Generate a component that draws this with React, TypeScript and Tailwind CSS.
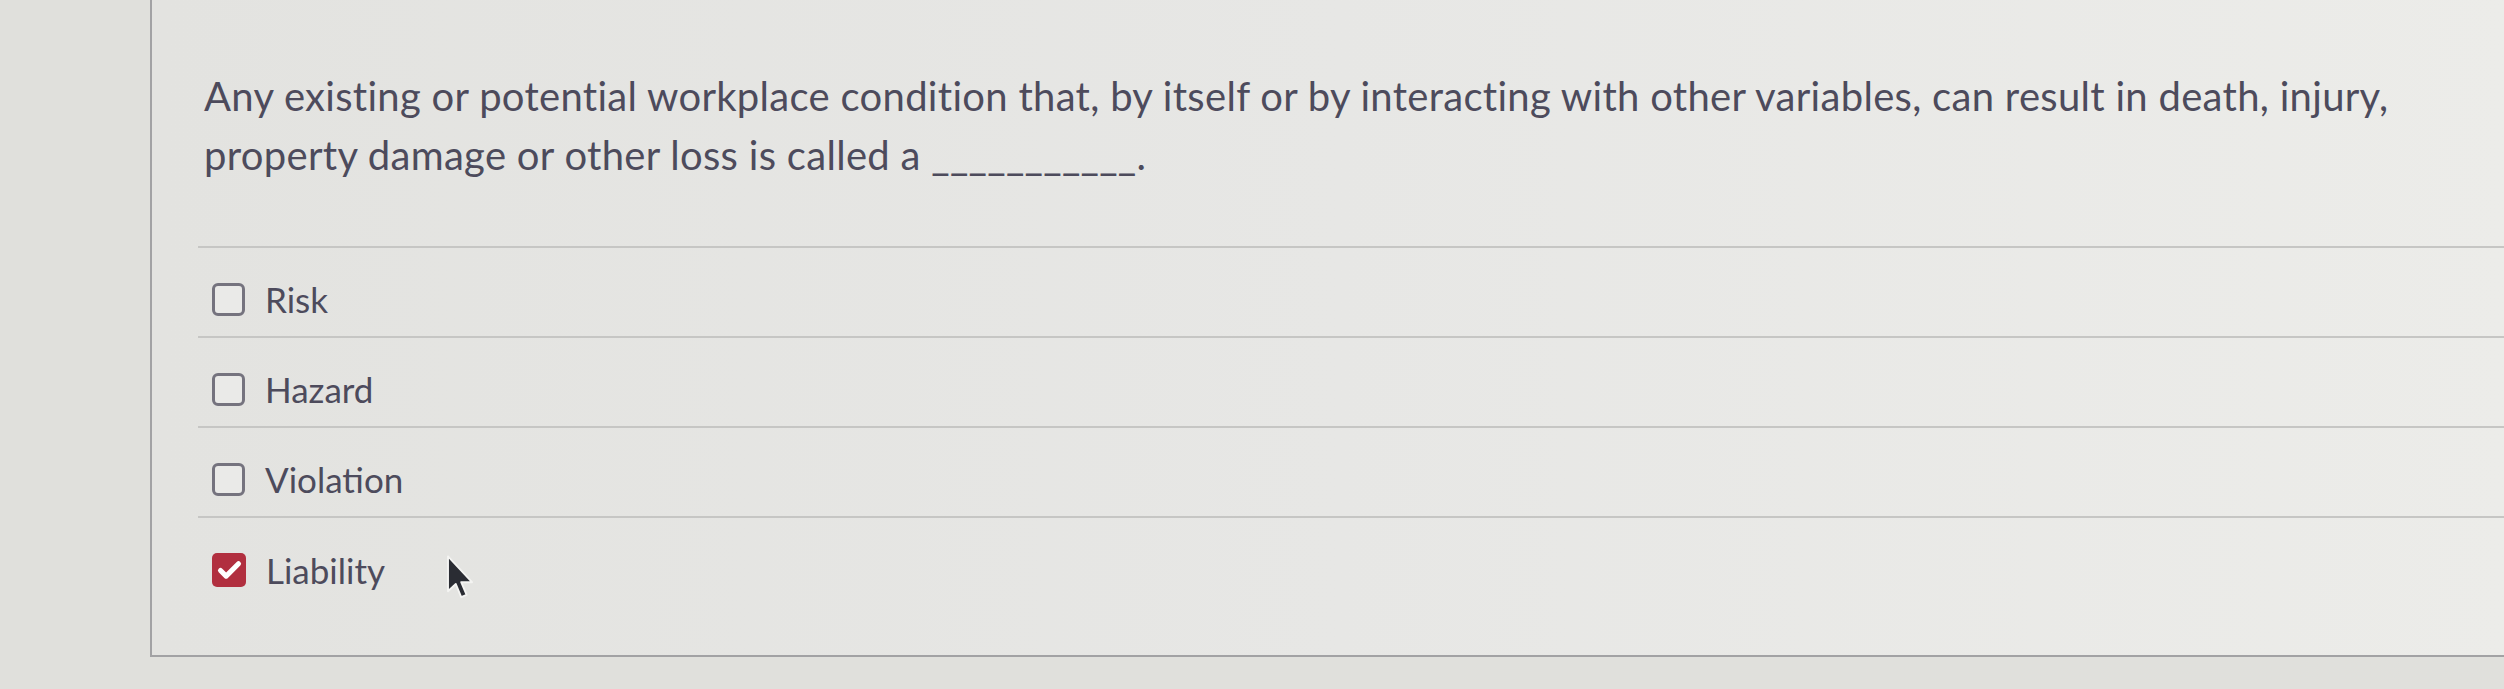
import { Check } from "lucide-react";

type Option = { label: string; checked?: boolean };

const options: Option[] = [
  { label: "Risk" },
  { label: "Hazard" },
  { label: "Violation" },
  { label: "Liability", checked: true },
];

function Box({ checked }: { checked?: boolean }) {
  if (checked) {
    return (
      <span className="flex h-[34px] w-[34px] shrink-0 items-center justify-center rounded-[5px] bg-[#b12f3f]">
        <Check className="h-[27px] w-[27px] text-white" strokeWidth={4.5} />
      </span>
    );
  }
  return <span className="h-[33px] w-[33px] shrink-0 rounded-[6px] border-[3px] border-[#75737e] bg-[#eaeae8]" />;
}

function Cursor() {
  return (
    <svg className="absolute left-[444px] top-[554px]" width="32" height="48" viewBox="0 0 26 40">
      <path
        d="M3 2 L3 31 L9.5 25 L14 36 L18.5 34 L14 23.5 L23 23.5 Z"
        fill="#2a2c33"
        stroke="#f4f4f2"
        strokeWidth="1.6"
        strokeLinejoin="round"
      />
    </svg>
  );
}

export default function App() {
  return (
    <div className="relative flex h-[689px] w-[2504px] overflow-hidden bg-[#e0e0dc] pl-[150px] font-['Lato',sans-serif] text-[#4d4b5c]">
      {/* Question panel */}
      <div className="flex h-[657px] flex-1 flex-col border-b-2 border-l-2 border-[#a2a2a4] bg-gradient-to-r from-[#e3e3e0] via-[#e7e7e5] to-[#ecece9] pl-[46px]">
        <p className="mt-[67px] w-[2240px] pl-[6px] text-[40px] leading-[59px] tracking-[0.3px]">
          Any existing or potential workplace condition that, by itself or by interacting with other variables, can
          result in death, injury, property damage or other loss is called a ___________.
        </p>

        <ul className="mt-[61px] border-t-2 border-[#c6c6c4]">
          {options.map((o, i) => (
            <li
              key={o.label}
              className={
                "flex h-[90px] items-center gap-[20px] pl-[14px] pt-[14px] " +
                (i < options.length - 1 ? "border-b-2 border-[#c6c6c4]" : "")
              }
            >
              <Box checked={o.checked} />
              <span className="text-[35px] leading-[40px]">{o.label}</span>
            </li>
          ))}
        </ul>
      </div>

      <Cursor />
    </div>
  );
}
